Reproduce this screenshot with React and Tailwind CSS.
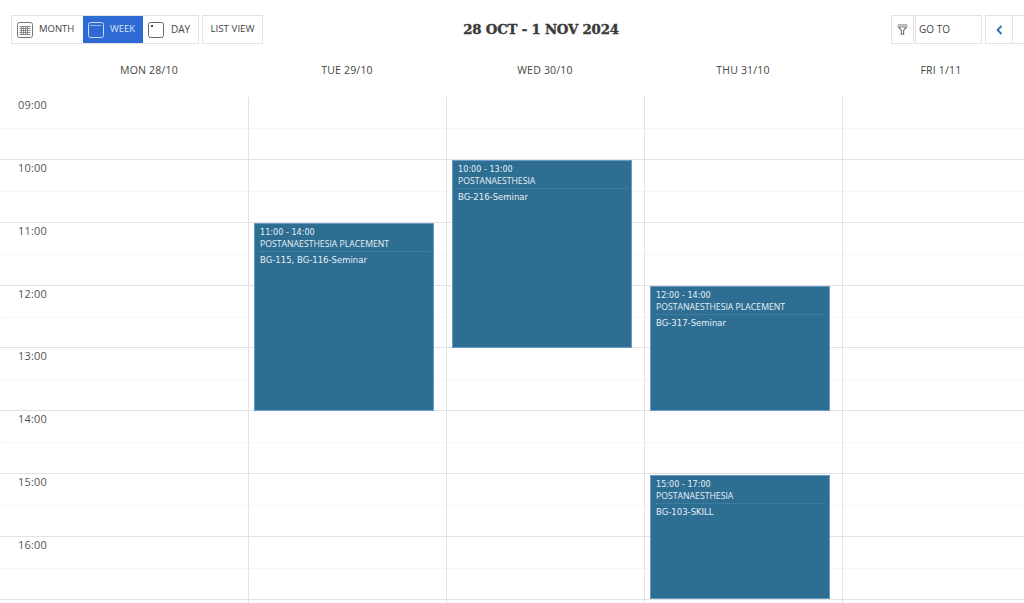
const hours = ["09:00","10:00","11:00","12:00","13:00","14:00","15:00","16:00"];
const days = ["MON 28/10","TUE 29/10","WED 30/10","THU 31/10","FRI 1/11"];
const events = [
  { cls: "left-[204px] top-[126px] h-[188px]", time: "11:00 - 14:00", title: "POSTANAESTHESIA PLACEMENT", room: "BG-115, BG-116-Seminar" },
  { cls: "left-[402px] top-[63px] h-[188px]", time: "10:00 - 13:00", title: "POSTANAESTHESIA", room: "BG-216-Seminar" },
  { cls: "left-[600px] top-[189px] h-[125px]", time: "12:00 - 14:00", title: "POSTANAESTHESIA PLACEMENT", room: "BG-317-Seminar" },
  { cls: "left-[600px] top-[378px] h-[124px]", time: "15:00 - 17:00", title: "POSTANAESTHESIA", room: "BG-103-SKILL" },
];

function MonthIcon() {
  return (
    <svg width="16" height="16" viewBox="0 0 16 16" fill="none" stroke="#777" strokeWidth="1">
      <rect x="0.5" y="0.5" width="15" height="15" rx="2" />
      <path d="M2.5 4.5h11M2.5 6.5h11M2.5 8.5h11M2.5 10.5h11M2.5 12.5h11M4.5 4v9M6.5 4v9M8.5 4v9M10.5 4v9" strokeWidth="0.8" />
    </svg>
  );
}
function WeekIcon() {
  return (
    <svg width="16" height="16" viewBox="0 0 16 16" fill="none" stroke="#c9d8f5" strokeWidth="1">
      <rect x="0.5" y="0.5" width="15" height="15" rx="2" />
      <path d="M2.5 3.5h11" strokeDasharray="1.5 0.7" />
    </svg>
  );
}
function DayIcon() {
  return (
    <svg width="16" height="16" viewBox="0 0 16 16" fill="none" stroke="#666" strokeWidth="1">
      <rect x="0.5" y="0.5" width="15" height="15" rx="2" />
      <rect x="3" y="3" width="2" height="2" fill="#444" stroke="none" />
    </svg>
  );
}

export default function App() {
  return (
    <div className="w-[1024px] h-[603px] overflow-hidden bg-white text-[#444] font-['Open_Sans',sans-serif]">
      <div className="w-[1060px]">
        <div className="h-[56px] pt-[15px] pl-[11px] flex items-start relative">
          <div className="flex h-[29px] w-[188px] border border-[#e2e2e2] text-[9.5px]">
            <div className="w-[71px] flex items-center pl-[5px] gap-[6px]"><MonthIcon /><span>MONTH</span></div>
            <div className="w-[60px] flex items-center pl-[5px] gap-[6px] bg-[#2d6ad3] text-[#dbe6fa]"><WeekIcon /><span>WEEK</span></div>
            <div className="flex-1 flex items-center pl-[5px] gap-[7px] text-[10px]"><DayIcon /><span>DAY</span></div>
          </div>
          <div className="ml-[3px] h-[29px] w-[61px] border border-[#e2e2e2] text-[9.8px] flex items-center justify-center">LIST VIEW</div>
          <div className="w-[200px] ml-[178px] h-[29px] flex items-center justify-center font-['DejaVu_Serif',serif] font-bold text-[13.3px] text-[#3a3a3a] whitespace-nowrap tracking-[-0.2px] [-webkit-text-stroke:0.4px_#3a3a3a]">28 OCT - 1 NOV 2024</div>
          <div className="ml-[250px] h-[29px] w-[23px] border border-[#e2e2e2] flex items-center justify-center">
            <svg width="11" height="11" viewBox="0 0 11 11" fill="none" stroke="#777" strokeWidth="1.2">
              <path d="M0.8 1h9.4M1.5 3h8L6.6 6.4V10.2H4.4V6.4Z" />
            </svg>
          </div>
          <div className="ml-[1px] h-[29px] w-[67px] border border-[#e2e2e2] text-[10px] flex items-center pl-[3px]">GO TO</div>
          <div className="ml-[3px] h-[29px] w-[28px] border border-[#e2e2e2] flex items-center justify-center">
            <svg width="7" height="10" viewBox="0 0 7 10" fill="none" stroke="#2d6ab3" strokeWidth="1.8"><path d="M5.5 1L1.5 5L5.5 9" /></svg>
          </div>
          <div className="h-[29px] w-[28px] border-y border-r border-[#e2e2e2] flex items-center justify-center">
            <svg width="7" height="10" viewBox="0 0 7 10" fill="none" stroke="#2d6ab3" strokeWidth="1.8"><path d="M1.5 1L5.5 5L1.5 9" /></svg>
          </div>
        </div>

        <div className="h-[41px] pl-[50px] flex">
          {days.map((d) => (
            <div key={d} className="w-[198px] text-center text-[10.5px] pt-[7px] tracking-[0.2px]">{d}</div>
          ))}
        </div>

        <div className="relative">
          {hours.map((h) => (
            <div key={h} className="flex h-[62.86px]">
              <div className="w-[249px] border-r border-[#e2e2e2] flex flex-col shrink-0">
                <div className="h-[32px] border-b border-dotted border-[#f0f0f0] pl-[18px] pt-[1px] text-[11px] leading-[14px] tracking-[0.2px] text-[#555]">{h}</div>
                <div className="flex-1 border-b border-[#e2e2e2]" />
              </div>
              {[0,1,2,3].map((i) => (
                <div key={i} className={i === 3 ? "w-[198px] flex flex-col" : "w-[198px] border-r border-[#e2e2e2] flex flex-col"}>
                  <div className="h-[32px] border-b border-dotted border-[#f0f0f0]" />
                  <div className="flex-1 border-b border-[#e2e2e2]" />
                </div>
              ))}
            </div>
          ))}
          <div className="flex h-[4px]">
            <div className="w-[249px] border-r border-[#e2e2e2]" />
            <div className="w-[198px] border-r border-[#e2e2e2]" />
            <div className="w-[198px] border-r border-[#e2e2e2]" />
            <div className="w-[198px] border-r border-[#e2e2e2]" />
          </div>

          {events.map((e) => (
            <div key={e.time} className={`absolute ${e.cls} ml-[50px] w-[180px] bg-[#2f6e93] border border-[#6a9cc6] text-[#e6eef3] pl-[5px] pr-[3px] pt-[3px] font-['DejaVu_Sans',sans-serif]`}>
              <div className="text-[8px] leading-[11px] tracking-[0.05px]">{e.time}</div>
              <div className="leading-[12px] whitespace-nowrap font-['Open_Sans',sans-serif] text-[8.7px] pb-[1px] border-b border-dotted border-[#4f8bb0]">{e.title}</div>
              <div className="text-[8.5px] leading-[11px] mt-[3px] whitespace-nowrap">{e.room}</div>
            </div>
          ))}
        </div>
      </div>
    </div>
  );
}
